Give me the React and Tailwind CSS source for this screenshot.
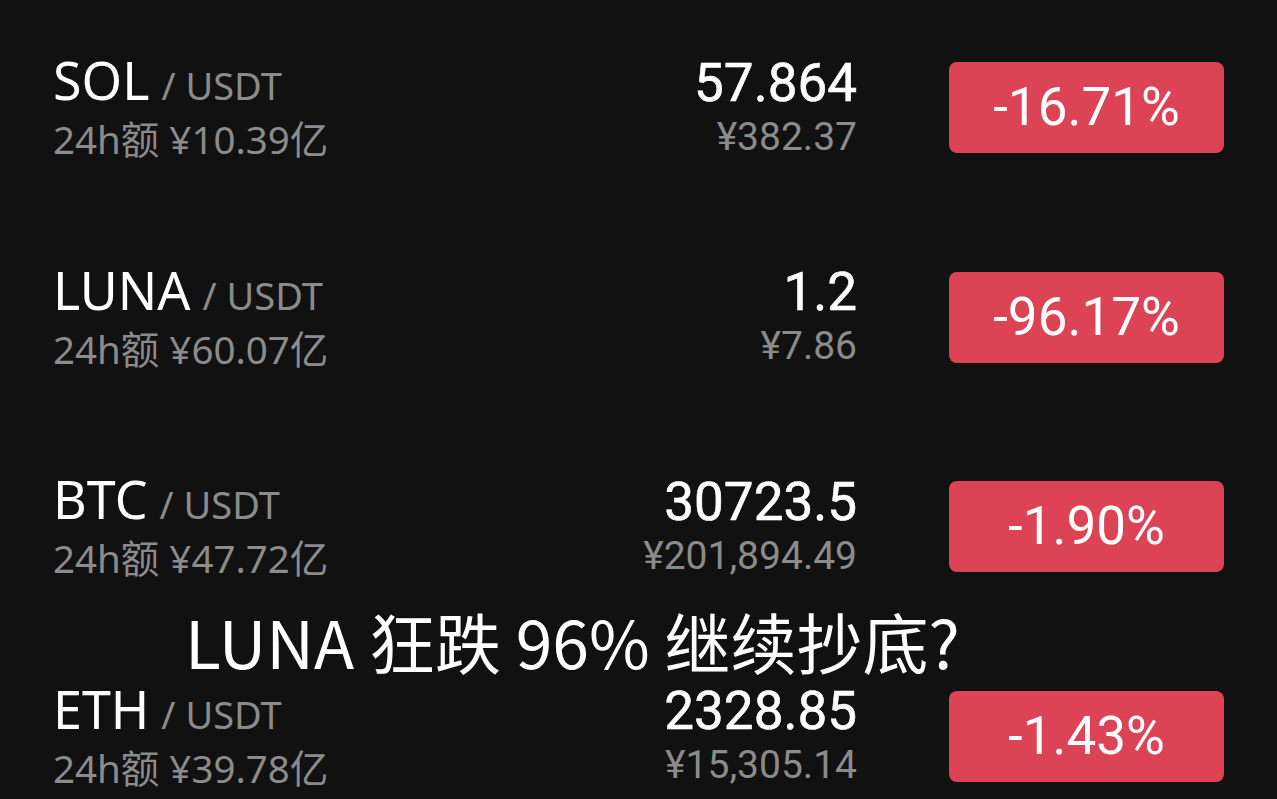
import React from "react";

const rows = [
  { sym: "SOL", vol: "10.39", price: "57.864", cny: "¥382.37", pct: "-16.71%" },
  { sym: "LUNA", vol: "60.07", price: "1.2", cny: "¥7.86", pct: "-96.17%" },
  { sym: "BTC", vol: "47.72", price: "30723.5", cny: "¥201,894.49", pct: "-1.90%" },
  { sym: "ETH", vol: "39.78", price: "2328.85", cny: "¥15,305.14", pct: "-1.43%" },
];

const sans = "font-['Noto_Sans','Noto_Sans_CJK_SC',sans-serif]";
const num = "font-['Roboto','Noto_Sans_CJK_SC',sans-serif]";

const Row = ({ r }) => (
  <div className="h-[209.5px] flex items-center pl-[53px] pr-[53px]">
    <div className={"flex-1 flex flex-col " + sans}>
      <div className="flex items-baseline">
        <span className="text-[52px] leading-[58px] text-white">{r.sym}</span>
        <span className="text-[38px] leading-[58px] text-[#8b8b8b] ml-[12px]">/ USDT</span>
      </div>
      <div className="text-[38.5px] leading-[50px] text-[#8b8b8b]">
        24h额 ¥{r.vol}亿
      </div>
    </div>
    <div className={"flex flex-col items-end mr-[92px] " + num}>
      <span className="text-[53px] leading-[58px] text-white [-webkit-text-stroke:0.6px_white]">{r.price}</span>
      <span className="text-[39px] leading-[50px] text-[#8b8b8b]">{r.cny}</span>
    </div>
    <div
      className={
        "w-[275px] h-[91px] rounded-[8px] bg-[#dc4456] flex items-center justify-center text-white text-[53px] " +
        num
      }
    >
      {r.pct}
    </div>
  </div>
);

const App = () => {
  return (
    <div className="relative w-[1277px] h-[799px] overflow-hidden bg-[#111111] pt-[3px]">
      {rows.map((r) => (
        <Row key={r.sym} r={r} />
      ))}
      <div className="absolute left-[185px] top-[607px] text-white text-[66px] leading-[66px] whitespace-nowrap font-['Noto_Sans_CJK_SC',sans-serif]">
        LUNA 狂跌 96% 继续抄底?
      </div>
    </div>
  );
};

export default App;
